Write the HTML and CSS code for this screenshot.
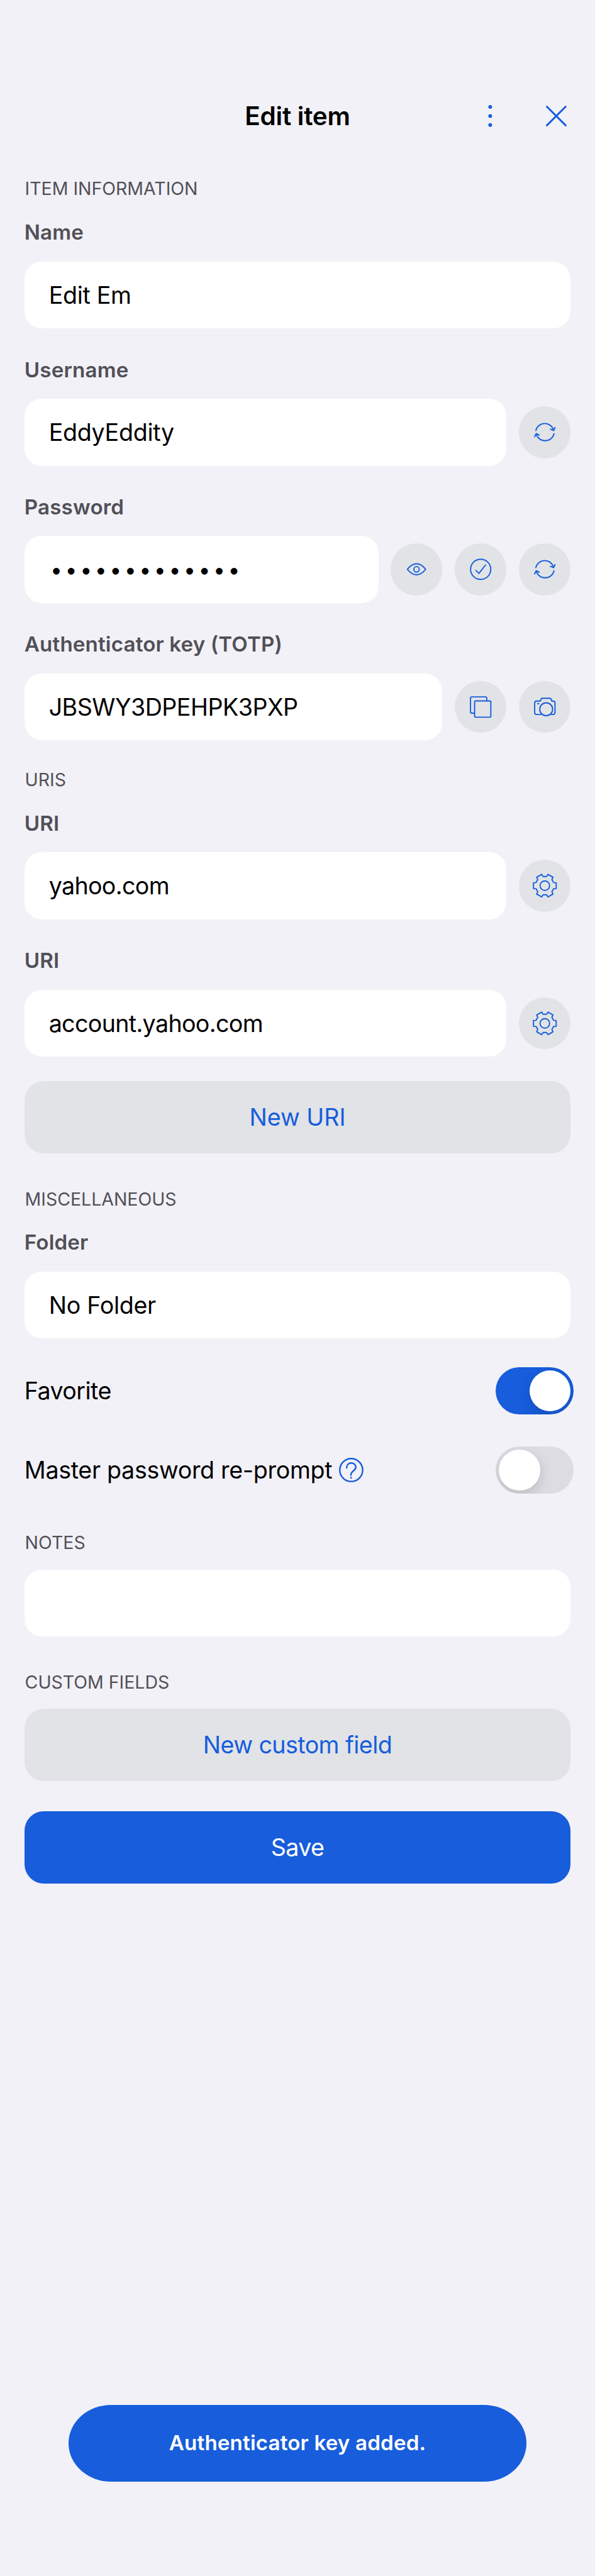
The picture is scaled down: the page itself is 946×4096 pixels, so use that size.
FILE: index.html
```html
<!DOCTYPE html>
<html lang="en">
<head>
<meta charset="utf-8">
<title>Edit item</title>
<link rel="stylesheet" href="styles.css">
</head>
<body>
<svg class="defs" width="0" height="0">
  <symbol id="sync" viewBox="-153 -153 306 306"><path d="M-53 -10A54 54 0 0 1 52 -10M54 9A54 54 0 0 1 -51 9M33 -18L52 -10L60 -28M-60 27L-51 8L-33 17"/></symbol>
  <symbol id="eye" viewBox="-153 -153 306 306"><path d="M-54 0C-20 -43 20 -43 54 0C20 43 -20 43 -54 0Z"/><circle r="16"/></symbol>
  <symbol id="check" viewBox="-153 -153 306 306"><circle r="59.5"/><path d="M-28 7L-10 24L29 -26"/></symbol>
  <symbol id="copy" viewBox="-153 -153 306 306"><rect x="-36" y="-36" width="96" height="96" rx="7"/><path d="M-37 36H-53q-7 0 -7 -7V-53q0 -7 7 -7H29q7 0 7 7V-37"/></symbol>
  <symbol id="camera" viewBox="-153 -153 306 306"><path d="M-22 44H-48q-12 0 -12 -12V-24q0 -11 12 -11H-30q6 0 6 -6q0 -11 11 -11H27q11 0 12 11q0 6 6 6h3q12 0 12 11V32q0 12 -12 12H37M-43 -20H-35"/><circle cx="8" cy="13" r="38"/></symbol>
  <symbol id="gear" viewBox="-153 -153 306 306"><path d="M52 -18L67 -17V17L52 18L41.600 36L48.200 49.500L18.800 66.500L10.400 54H-10.400L-18.800 66.500L-48.200 49.500L-41.600 36L-52 18L-67 17V-17L-52 -18L-41.600 -36L-48.200 -49.500L-18.800 -66.500L-10.400 -54H10.400L18.800 -66.500L48.200 -49.500L41.600 -36Z"/><circle r="28"/></symbol>
</svg>

<header class="nav">
  <h1 class="nav-title">Edit item</h1>
  <div class="nav-actions">
    <svg class="icon-more" viewBox="0 0 48 48"><circle cx="24" cy="6.300" r="3.700"/><circle cx="24" cy="24" r="3.700"/><circle cx="24" cy="41.700" r="3.700"/></svg>
    <svg class="icon-close" viewBox="0 0 48 48"><path d="M5.500 5.500L42.500 42.500M42.500 5.500L5.500 42.500"/></svg>
  </div>
</header>

<main class="form">
  <h2 class="section">ITEM INFORMATION</h2>
  <div class="group">
    <div class="field"><label class="label">Name</label>
      <div class="row"><div class="box value">Edit Em</div></div></div>
    <div class="field"><label class="label">Username</label>
      <div class="row"><div class="box value">EddyEddity</div>
        <button class="round"><svg><use href="#sync"/></svg></button></div></div>
    <div class="field"><label class="label">Password</label>
      <div class="row"><div class="box value dots">•••••••••••••</div>
        <button class="round"><svg><use href="#eye"/></svg></button>
        <button class="round"><svg><use href="#check"/></svg></button>
        <button class="round"><svg><use href="#sync"/></svg></button></div></div>
    <div class="field"><label class="label">Authenticator key (TOTP)</label>
      <div class="row"><div class="box value key">JBSWY3DPEHPK3PXP</div>
        <button class="round"><svg><use href="#copy"/></svg></button>
        <button class="round"><svg><use href="#camera"/></svg></button></div></div>
  </div>

  <h2 class="section uris">URIS</h2>
  <div class="group">
    <div class="field"><label class="label">URI</label>
      <div class="row"><div class="box value uri">yahoo.com</div>
        <button class="round"><svg><use href="#gear"/></svg></button></div></div>
    <div class="field"><label class="label">URI</label>
      <div class="row"><div class="box value uri">account.yahoo.com</div>
        <button class="round"><svg><use href="#gear"/></svg></button></div></div>
  </div>
  <button class="btn new-uri">New URI</button>

  <h2 class="section misc">MISCELLANEOUS</h2>
  <div class="group">
    <div class="field"><label class="label">Folder</label>
      <div class="row"><div class="box value">No Folder</div></div></div>
  </div>
  <div class="toggle-row favorite"><span class="toggle-text">Favorite</span><span class="switch on"><span class="knob"></span></span></div>
  <div class="toggle-row reprompt"><span class="toggle-text">Master password re-prompt</span>
    <svg class="help" viewBox="-72 -72 144 144"><circle r="67.500"/><path d="M-27 -13C-27 -50 27 -50 27 -16C27 6 -2 4 -2 30"/><circle class="help-dot" cx="-1" cy="46" r="5.500"/></svg>
    <span class="switch"><span class="knob"></span></span></div>

  <h2 class="section notes">NOTES</h2>
  <div class="box notes-box"></div>

  <h2 class="section custom">CUSTOM FIELDS</h2>
  <button class="btn new-field">New custom field</button>
  <button class="btn save">Save</button>
</main>

<div class="toast">Authenticator key added.</div>
</body>
</html>
```

FILE: styles.css
```css
/* 1rem = 33.33 device points */
html { font-size: 80.875px; }
* { box-sizing: border-box; }
body {
  margin: 0;
  height: 4096px;
  display: flex;
  flex-direction: column;
  background: #f2f1f7;
  color: #000;
  font-family: Inter, "Liberation Sans", sans-serif;
}
h1, h2 { margin: 0; }
button { border: 0; padding: 0; margin: 0; font-family: inherit; }
.defs { position: absolute; }

.nav {
  display: grid;
  grid-template-columns: 1fr auto 1fr;
  align-items: center;
  height: 1.32rem;
  margin-top: 1.625rem;
  padding: 0 .52rem;
}
.nav-title { grid-column: 2; font-size: .5rem; font-weight: 600; letter-spacing: -.003rem; white-space: nowrap; }
.nav-actions { grid-column: 3; display: flex; justify-content: flex-end; gap: .82rem; }
.nav-actions svg { width: .48rem; height: .48rem; flex: none; }
.icon-more { fill: #175ddc; }
.icon-close { fill: none; stroke: #175ddc; stroke-width: 3.600; stroke-linecap: round; }

.form { padding: .548rem .48rem 0; display: flex; flex-direction: column; }
.section {
  font-size: .352rem;
  line-height: .44rem;
  font-weight: 400;
  color: #515057;
  margin-left: .01rem;
  margin-bottom: .387rem;
}
.group { display: flex; flex-direction: column; gap: .56rem; }
.label {
  display: block;
  font-size: .41rem;
  line-height: .5rem;
  font-weight: 600;
  letter-spacing: .0018rem;
  color: #515057;
  margin-bottom: .32rem;
}
.row { display: flex; align-items: center; gap: .24rem; }
.box { height: 1.32rem; background: #fff; border-radius: .34rem; }
.value {
  flex: 1;
  padding-left: .48rem;
  font-size: .465rem;
  line-height: 1.34rem;
  letter-spacing: -.0035rem;
  white-space: nowrap;
}
.value.key { letter-spacing: -.006rem; }
.value.uri { letter-spacing: -.008rem; }
.value.dots { padding-left: .51rem; font-size: .42rem; letter-spacing: .055rem; }
.round {
  width: 1.02rem;
  height: 1.02rem;
  flex: none;
  border-radius: 50%;
  background: #e1e3e7;
}
.round svg {
  display: block;
  width: 1.02rem;
  height: 1.02rem;
  fill: none;
  stroke: #175ddc;
  stroke-width: 7;
  stroke-linecap: round;
  stroke-linejoin: round;
}
.uris { margin-top: .553rem; }
.btn {
  height: 1.42rem;
  border-radius: .38rem;
  background: #e1e3e7;
  color: #175ddc;
  font-size: .465rem;
}
.new-uri { margin-top: .48rem; }
.new-field { letter-spacing: -.007rem; }
.misc { margin-top: .673rem; }
.toggle-row { display: flex; align-items: center; height: .93rem; margin-right: -.06rem; font-size: .465rem; letter-spacing: -.004rem; }
.favorite { margin-top: .56rem; letter-spacing: -.007rem; }
.reprompt { margin-top: .63rem; }
.help { width: .48rem; height: .48rem; margin-left: .13rem; fill: none; stroke: #175ddc; stroke-width: 9; stroke-linecap: round; }
.help-dot { fill: #175ddc; stroke: none; }
.switch {
  display: flex;
  width: 1.53rem;
  height: .93rem;
  padding: .06rem;
  margin-left: auto;
  border-radius: .465rem;
  background: #dddce2;
  overflow: hidden;
}
.switch.on { background: #175ddc; justify-content: flex-end; }
.knob { width: .81rem; height: .81rem; border-radius: 50%; background: #fff; box-shadow: 0 .09rem .24rem rgba(0, 0, 0, .15); }
.notes { margin-top: .747rem; margin-bottom: .303rem; }
.custom { margin-top: .673rem; margin-bottom: .307rem; }
.save { margin-top: .6rem; background: #175ddc; color: #fff; letter-spacing: -.008rem; }

.toast {
  width: 9rem;
  height: 1.5rem;
  margin: auto auto 1.86rem;
  border-radius: .84rem / .75rem;
  background: #175ddc;
  color: #fff;
  font-size: .41rem;
  font-weight: 600;
  letter-spacing: .002rem;
  line-height: 1.5rem;
  text-align: center;
}
```
